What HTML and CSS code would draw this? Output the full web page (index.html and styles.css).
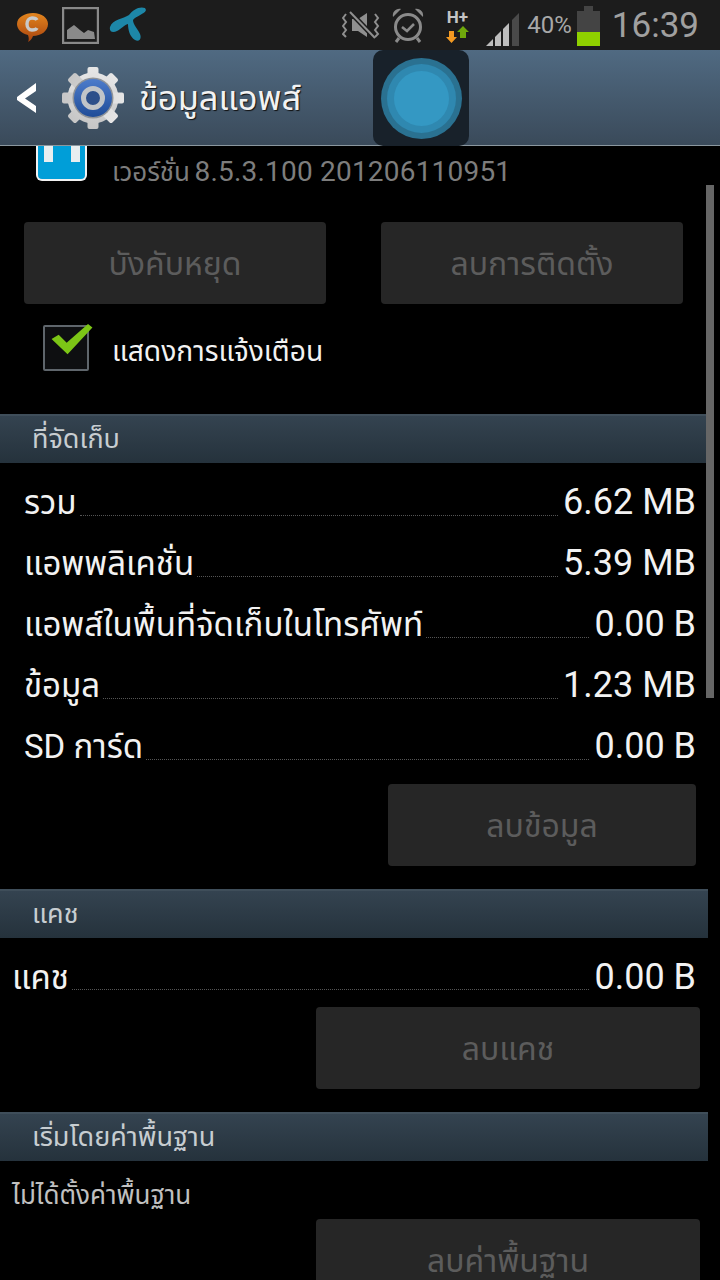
FILE: index.html
```html
<!DOCTYPE html>
<html>
  <head>
    <title>App info</title>
    <meta charset="UTF-8" />
    <link rel="stylesheet" href="styles.css">
  </head>
  <body>
    <div class="screen">
      <div class="status">
        <svg class="ic" width="48" height="36" viewBox="0 0 48 36">
          <defs>
            <linearGradient id="chat" x1="0" y1="0" x2="0" y2="1">
              <stop offset="0" stop-color="#e2851e" />
              <stop offset="1" stop-color="#a8430f" />
            </linearGradient>
          </defs>
          <path d="M17 29c-1 3-3 5-5 6 1-2 1-4 0-7C5 26 1 22 1 17 1 10 9 6 17 6c9 0 15 5 15 11 0 7-7 12-15 12z" fill="url(#chat)" />
          <path d="M21 13c-1-2-3-2-5-2-3 0-5 3-5 6s2 6 5 6c2 0 4 0 5-2" fill="none" stroke="#c9c9c9" stroke-width="3.4" />
        </svg>
        <svg class="ic pic" width="37" height="37" viewBox="0 0 37 37">
          <rect x="1" y="1" width="35" height="35" fill="none" stroke="#8a8a8a" stroke-width="2.4" />
          <path d="M5 32V23l7-5 6 5 4 3 4-3 6 2 1 7z" fill="#8a8a8a" />
        </svg>
        <svg class="ic tele" width="38" height="36" viewBox="0 0 38 36">
          <path d="M36 1C30-1 24 3 20 8 14 12 4 12 1 20c-1 5 3 6 7 4 4-2 7-6 11-7 0 6 2 13 7 16 4 2 7-1 5-6-2-5-7-9-7-14 3-4 12-6 13-10z" fill="#1d87a8" />
        </svg>
        <div class="spacer"></div>
        <svg class="ic mute" width="38" height="28" viewBox="0 0 38 28">
          <path d="M10 8h6l9-6v24l-9-6h-6z" fill="#8f8f8f" />
          <path d="M8 1l25 26" stroke="#1c1c1c" stroke-width="5" />
          <path d="M8 1l25 26" stroke="#8f8f8f" stroke-width="2" />
          <path d="M4 3l-3 4 3 4-3 4 3 4-3 4 3 3M33 3l3 4-3 4 3 4-3 4 3 4-3 3" fill="none" stroke="#8f8f8f" stroke-width="2" />
        </svg>
        <svg class="ic alarm" width="34" height="36" viewBox="0 0 34 36">
          <circle cx="17" cy="20" r="12.5" fill="none" stroke="#8a8a8a" stroke-width="3" />
          <path d="M11 20l5 4 7-7" fill="none" stroke="#8a8a8a" stroke-width="2.6" />
          <path d="M2 10c-1-5 3-9 8-8zM32 10c1-5-3-9-8-8z" fill="#8a8a8a" />
          <path d="M8 31l-3 4M26 31l3 4" stroke="#8a8a8a" stroke-width="3" />
        </svg>
        <div class="net">
          <span class="net-label">H+</span>
          <svg width="24" height="17" viewBox="0 0 24 17">
            <path d="M4 5h5v6h3l-5.5 6L1 11h3z" fill="#f39a22" />
            <path d="M15 12V6h-3l6-6 6 6h-3v6z" fill="#6fa80c" />
          </svg>
        </div>
        <svg class="ic signal" width="33" height="35" viewBox="0 0 33 35">
          <path d="M0 35l7-7v7z" fill="#bdbdbd" />
          <path d="M9 26l6-6v15H9z" fill="#bdbdbd" />
          <path d="M17 18l6-6v23h-6z" fill="#bdbdbd" />
          <path d="M26 9l7-7v33h-7z" fill="#4a4a4a" />
        </svg>
        <span class="pct">40%</span>
        <div class="batt">
          <div class="batt-cap"></div>
          <div class="batt-body"><div class="batt-fill"></div></div>
        </div>
        <span class="clock">16:39</span>
      </div>

      <div class="actionbar">
        <svg class="back" width="20" height="32" viewBox="0 0 20 32">
          <path d="M19 1L0 15v3l19 13v-7L8 16.500 19 9z" fill="#fff" />
        </svg>
        <svg class="gear" width="62" height="62" viewBox="0 0 62 62">
          <defs>
            <linearGradient id="blue" x1="0" y1="0" x2="0" y2="1">
              <stop offset="0" stop-color="#4d7ccb" />
              <stop offset="1" stop-color="#1f4c98" />
            </linearGradient>
            <linearGradient id="steel" x1="0" y1="0" x2="0" y2="1">
              <stop offset="0" stop-color="#e6e6e6" />
              <stop offset="1" stop-color="#c6c6c6" />
            </linearGradient>
          </defs>
          <g fill="url(#steel)">
            <circle cx="31" cy="31" r="25.500" />
            <rect x="25.500" y="0" width="11" height="62" rx="2" />
            <rect x="25.500" y="0" width="11" height="62" rx="2" transform="rotate(45 31 31)" />
            <rect x="25.500" y="0" width="11" height="62" rx="2" transform="rotate(90 31 31)" />
            <rect x="25.500" y="0" width="11" height="62" rx="2" transform="rotate(135 31 31)" />
          </g>
          <circle cx="31" cy="31" r="20.500" fill="#8f9398" />
          <circle cx="31" cy="31" r="19" fill="url(#blue)" />
          <circle cx="31" cy="31" r="9.500" fill="#2c4f8a" stroke="#c0c4c8" stroke-width="5" />
        </svg>
        <span class="bar-title">ข้อมูลแอพส์</span>
      </div>

      <div class="content">
        <div class="version-row">
          <div class="appicon"><i></i><i></i></div>
          <span class="version">เวอร์ชั่น <span class="version-no">8.5.3.100 201206110951</span></span>
        </div>

        <div class="btn-row">
          <div class="btn">บังคับหยุด</div>
          <div class="btn">ลบการติดตั้ง</div>
        </div>

        <div class="check-row">
          <div class="checkbox">
            <svg class="tick" width="44" height="32" viewBox="0 0 48 36">
              <path d="M1 17l8-5 9 9L42 0l5 4-28 30z" fill="#7cc516" />
            </svg>
          </div>
          <span class="check-label">แสดงการแจ้งเตือน</span>
        </div>

        <div class="sec-head first">ที่จัดเก็บ</div>
        <div class="rows">
          <div class="row"><span>รวม</span><i></i><b>6.62 MB</b></div>
          <div class="row"><span>แอพพลิเคชั่น</span><i></i><b>5.39 MB</b></div>
          <div class="row"><span>แอพส์ในพื้นที่จัดเก็บในโทรศัพท์</span><i></i><b>0.00 B</b></div>
          <div class="row"><span>ข้อมูล</span><i></i><b>1.23 MB</b></div>
          <div class="row"><span>SD การ์ด</span><i></i><b>0.00 B</b></div>
        </div>
        <div class="btn btn-data">ลบข้อมูล</div>

        <div class="sec-head">แคช</div>
        <div class="row row-cache"><span>แคช</span><i></i><b>0.00 B</b></div>
        <div class="btn btn-wide">ลบแคช</div>

        <div class="sec-head">เริ่มโดยค่าพื้นฐาน</div>
        <div class="note">ไม่ได้ตั้งค่าพื้นฐาน</div>
        <div class="btn btn-wide">ลบค่าพื้นฐาน</div>
      </div>

      <div class="scrollbar"></div>
      <div class="bubble"><div class="bubble-in"></div></div>
    </div>
  </body>
</html>
```

FILE: styles.css
```css
html,
body {
  margin: 0;
  padding: 0;
  background: #000;
}
.screen {
  position: relative;
  width: 720px;
  height: 1280px;
  overflow: hidden;
  background: #000;
  color: #fff;
  font-family: Roboto, "Noto Sans Thai", "Noto Sans", "DejaVu Sans", sans-serif;
}
.status {
  display: flex;
  align-items: center;
  height: 50px;
  padding: 0 21px 0 16px;
  box-sizing: border-box;
  background: #1c1c1c;
}
.ic {
  display: block;
  flex: none;
}
.pic {
  margin-left: -2px;
}
.tele {
  margin-left: 10px;
}
.spacer {
  flex: 1;
}
.mute {
  margin-right: 11px;
}
.net {
  display: flex;
  flex-direction: column;
  align-items: center;
  width: 26px;
  margin: 0 16px 0 19px;
}
.net-label {
  font-size: 17px;
  line-height: 18px;
  font-weight: 700;
  color: #c4c4c4;
}
.signal {
  margin-top: 6px;
}
.pct {
  margin-left: 8px;
  font-size: 24px;
  color: #a8a8a8;
}
.batt {
  width: 23px;
  margin-left: 5px;
  margin-top: 2px;
}
.batt-cap {
  width: 9px;
  height: 5px;
  margin: 0 auto;
  background: #444;
}
.batt-body {
  display: flex;
  align-items: flex-end;
  height: 35px;
  background: #444;
}
.batt-fill {
  width: 100%;
  height: 14px;
  background: #8fd000;
}
.clock {
  margin-left: 12px;
  font-size: 35px;
  color: #a0a0a0;
}
.actionbar {
  display: flex;
  align-items: center;
  height: 96px;
  box-sizing: border-box;
  padding-left: 17px;
  background: linear-gradient(#506a82, #3a4a5a);
  border-bottom: 1px solid #8b979f;
}
.back {
  flex: none;
}
.gear {
  flex: none;
  margin-left: 25px;
}
.bar-title {
  margin-left: 15px;
  padding-top: 4px;
  font-size: 34.500px;
  color: #f2f2f2;
  text-shadow: 1px 1px 1px #111;
}
.bubble {
  position: absolute;
  left: 373px;
  top: 50px;
  width: 96px;
  height: 96px;
  border-radius: 10px;
  background: #18212a;
  display: flex;
  align-items: center;
  justify-content: center;
}
.bubble-in {
  width: 55px;
  height: 55px;
  border-radius: 50%;
  background: #3498c3;
  box-shadow: 0 0 0 7px #2f88b0, 0 0 0 13px #2a7191;
}
.scrollbar {
  position: absolute;
  left: 706px;
  top: 185px;
  width: 8px;
  height: 513px;
  background: #666;
}
.version-row {
  display: flex;
  height: 76px;
}
.appicon {
  display: flex;
  justify-content: center;
  gap: 18px;
  width: 47px;
  height: 33px;
  margin-left: 36px;
  background: #009ed8;
  border: 2px solid #f2f2f2;
  border-top: 0;
  border-radius: 0 0 6px 6px;
}
.appicon i {
  width: 9px;
  height: 16px;
  background: #e8eef0;
}
.version {
  margin-left: 25px;
  padding-top: 8px;
  font-size: 26px;
  line-height: 36px;
  color: #7d7d7d;
}
.version-no {
  margin-left: -2px;
  font-size: 28px;
  letter-spacing: 0.200px;
}
.btn {
  display: flex;
  align-items: center;
  justify-content: center;
  height: 82px;
  padding-top: 4px;
  box-sizing: border-box;
  border-radius: 4px;
  background: #262626;
  font-size: 32px;
  color: #5c5c5c;
}
.btn-row {
  display: flex;
  gap: 55px;
  padding: 0 37px 0 24px;
}
.btn-row .btn {
  flex: 1;
}
.check-row {
  display: flex;
  align-items: flex-start;
  height: 110px;
  box-sizing: border-box;
  padding: 21px 0 0 43px;
}
.checkbox {
  position: relative;
  flex: none;
  width: 46px;
  height: 46px;
  box-sizing: border-box;
  background: #0e0f11;
  border: 2px solid #5f666c;
  border-radius: 2px;
}
.tick {
  position: absolute;
  left: 5px;
  top: -3px;
}
.check-label {
  margin: 4px 0 0 23px;
  font-size: 28.200px;
  line-height: 46px;
  color: #f2f2f2;
}
.sec-head {
  display: flex;
  align-items: center;
  width: 708px;
  height: 49px;
  box-sizing: border-box;
  margin-top: 23px;
  padding-left: 32px;
  background: linear-gradient(#344350, #25323c);
  border-top: 2px solid #3f4e5a;
  font-size: 27px;
  color: #c7cdd1;
}
.sec-head.first {
  margin-top: 0;
}
.rows {
  padding: 9px 0 0;
}
.row {
  display: flex;
  align-items: baseline;
  height: 61px;
  padding: 0 24px;
  box-sizing: border-box;
  line-height: 61px;
  font-size: 33px;
  color: #f2f2f2;
}
.row i {
  flex: 1;
  align-self: flex-end;
  margin: 0 5px 17px 3px;
  border-bottom: 1px dotted #555;
}
.row b {
  font-weight: 400;
  font-size: 36px;
}
.row-cache {
  padding-left: 12px;
  margin-top: 8px;
  line-height: 63px;
}
.btn-data {
  width: 308px;
  margin: 7px 0 0 388px;
}
.btn-wide {
  width: 384px;
  margin-left: 316px;
}
.note {
  height: 58px;
  padding-left: 12px;
  line-height: 68px;
  font-size: 26px;
  color: #c0c0c0;
}
```
